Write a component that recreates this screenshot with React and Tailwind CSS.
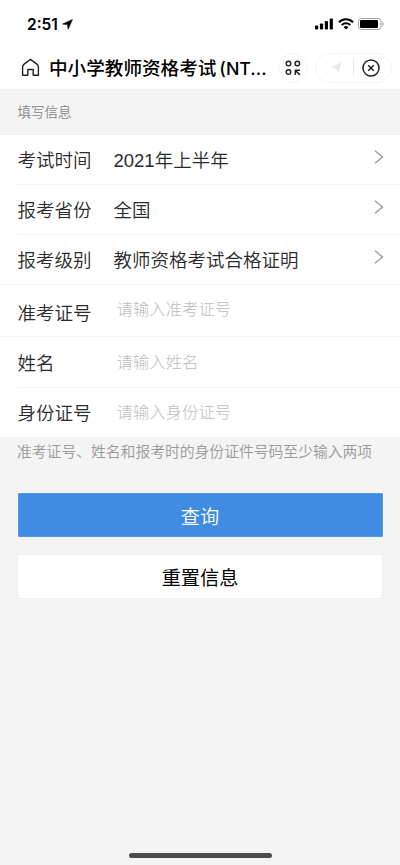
const pickers = [
  { label: "考试时间", year: "2021", value: "年上半年" },
  { label: "报考省份", value: "全国" },
  { label: "报考级别", value: "教师资格考试合格证明" },
];

const inputs = [
  { label: "准考证号", placeholder: "请输入准考证号", row: "h-[52px] pt-[4px]", input: "-top-[4.5px]", line: "left-0" },
  { label: "姓名", placeholder: "请输入姓名", row: "h-[51px] pt-[1px]", input: "-top-[2px]", line: "left-[18px]" },
  { label: "身份证号", placeholder: "请输入身份证号", row: "h-[49px] pt-[1px]", input: "-top-[2px]", line: "hidden" },
];

function StatusBar() {
  return (
    <div className="flex h-[46px] items-center pt-[2px] pl-[27px] pr-4">
      <span className="mt-px font-['Inter'] text-[15.5px] font-semibold leading-none text-black">2:51</span>
      <svg className="ml-[4px] size-[11px]" viewBox="0 0 11 11">
        <path d="M10.4.6 6.2 10.2 5.5 5.6.6 5.1z" fill="#000" stroke="#000" strokeWidth=".6" strokeLinejoin="round" />
      </svg>
      <div className="ml-auto flex items-center">
        <svg className="mr-[5px] h-[12px] w-[18px]" viewBox="0 0 18 12">
          <rect x="0" y="7.5" width="3.2" height="4" rx=".8" />
          <rect x="4.9" y="5.4" width="3.2" height="6.1" rx=".8" />
          <rect x="9.8" y="3" width="3.2" height="8.5" rx=".8" />
          <rect x="14.7" y=".5" width="3.2" height="11" rx=".8" />
        </svg>
        <svg className="mr-[4px] h-[12px] w-[16px]" viewBox="0 0 16 12">
          <g fill="none" stroke="#000" strokeWidth="2">
            <path d="M1 4.2a10 10 0 0 1 14 0" />
            <path d="M3.7 7a6.1 6.1 0 0 1 8.6 0" />
          </g>
          <path d="M8 11.6 5.6 9.2a3.4 3.4 0 0 1 4.8 0z" />
        </svg>
        <svg className="h-[12px] w-[26px]" viewBox="0 0 26 12">
          <rect x=".5" y=".5" width="22.5" height="11" rx="3" fill="none" stroke="#a3a3a3" />
          <rect x="2" y="2" width="18" height="8" rx="1.2" />
          <path d="M24.2 4v4c.9-.4 1.3-1.2 1.3-2s-.4-1.6-1.3-2z" fill="#a3a3a3" />
        </svg>
      </div>
    </div>
  );
}

function NavBar() {
  return (
    <div className="flex h-[43px] items-center pl-[21px] pr-[8px]">
      <svg className="size-[19px] shrink-0" viewBox="0 0 19 19" fill="none" stroke="#222" strokeWidth="1.4" strokeLinejoin="round">
        <path d="M3.4 5.9 9.5 1.4l6.1 4.5q1.8 1.3 1.8 3v8.3h-5.2v-5.7H6.800v5.7H1.6V8.9q0-1.7 1.8-3z" />
      </svg>
      <h1 className="ml-[9px] w-[219px] shrink-0 whitespace-nowrap text-[18.6px] font-medium leading-none text-black">
        中小学教师资格考试<span className="ml-[3px] font-['Inter'] text-[17.8px] font-medium">(NT...</span>
      </h1>
      <div className="ml-[10px] flex size-[30px] shrink-0 items-center justify-center rounded-full border border-[#f4f4f4]">
        <svg className="size-[16px]" viewBox="0 0 16 16" fill="none" stroke="#222" strokeWidth="1.4">
          <circle cx="3.5" cy="3.5" r="2.3" />
          <circle cx="12.3" cy="3.5" r="2.3" />
          <circle cx="3.5" cy="12.1" r="2.3" />
          <path d="M10.3 15V10.3H15M10.5 10.5l4.4 4.4" strokeWidth="1.5" />
        </svg>
      </div>
      <div className="ml-[7px] flex h-[30px] w-[77px] shrink-0 items-center rounded-full border border-[#f4f4f4]">
        <svg className="ml-[14px] size-[12px]" viewBox="0 0 12 12">
          <path d="M11.5.5 8.2 11.5 6 6.7.5 5.7z" fill="#e9e9e9" />
        </svg>
        <div className="ml-[11px] h-[17px] w-px bg-[#e6e6e6]" />
        <svg className="ml-[8px] size-[18px]" viewBox="0 0 18 18" fill="none" stroke="#222" strokeWidth="1.5">
          <circle cx="9" cy="9" r="8" />
          <path d="m6.2 6.2 5.6 5.6M11.8 6.2l-5.6 5.6" />
        </svg>
      </div>
    </div>
  );
}

export default function App() {
  return (
    <div className="flex h-[865px] w-[400px] flex-col overflow-hidden bg-[#f4f4f4] font-['Noto_Sans_CJK_SC',sans-serif]">
      <header className="h-[89px] bg-white">
        <StatusBar />
        <NavBar />
      </header>

      <div className="flex h-[46px] items-center border-b border-[#efefef] pb-px pl-[17.5px] text-[13.5px] font-[350] text-[#888]">
        填写信息
      </div>

      <main className="bg-white text-[18.5px] font-[350] text-[#2b2b2b]">
        {pickers.map((item, i) => (
          <div key={item.label} className="relative flex h-[50px] items-center pl-[17.5px]">
            <span className="w-[96px] whitespace-nowrap">{item.label}</span>
            <span className="whitespace-nowrap">
              {item.year && <span className="font-['Liberation_Sans'] leading-none">{item.year}</span>}
              {item.value}
            </span>
            <svg className="mr-[16px] mb-[6px] ml-auto h-[14px] w-[10px]" viewBox="0 0 10 14" fill="none" stroke="#999" strokeWidth="1.3">
              <path d="m1 .8 7.6 6.2L1 13.2" />
            </svg>
            <div className={i === pickers.length - 1 ? "absolute right-0 bottom-0 left-0 h-px bg-[#f4f4f4]" : "absolute right-0 bottom-0 left-[18px] h-px bg-[#f4f4f4]"} />
          </div>
        ))}

        {inputs.map((item) => (
          <div key={item.label} className={`relative flex items-center pl-[17.5px] ${item.row}`}>
            <label className="w-[99px] shrink-0 whitespace-nowrap">{item.label}</label>
            <input
              className={`relative w-[240px] bg-transparent text-[16.4px] font-[300] outline-none placeholder:text-[#bdbdbd] ${item.input}`}
              placeholder={item.placeholder}
            />
            <div className={`absolute right-0 bottom-0 h-px bg-[#f4f4f4] ${item.line}`} />
          </div>
        ))}
      </main>

      <p className="pt-[3px] pl-[17px] text-[14.8px] font-[350] leading-[22px] whitespace-nowrap text-[#999]">
        准考证号、姓名和报考时的身份证件号码至少输入两项
      </p>

      <div className="mt-[31px] flex flex-col gap-[17px] pr-[17px] pl-[18px]">
        <button className="h-[44px] rounded-[1px] border border-[#5297e5] bg-[#3f8ce2] pt-[2px] pr-[1px] text-[19.2px] font-[350] text-white">查询</button>
        <button className="-ml-px h-[45px] rounded-[1px] border border-[#eee] bg-white pt-[2px] text-[19.2px] text-black">重置信息</button>
      </div>

      <div className="mx-auto mt-auto mb-[7px] h-[5px] w-[143px] rounded-full bg-[#4d4d4d]" />
    </div>
  );
}
